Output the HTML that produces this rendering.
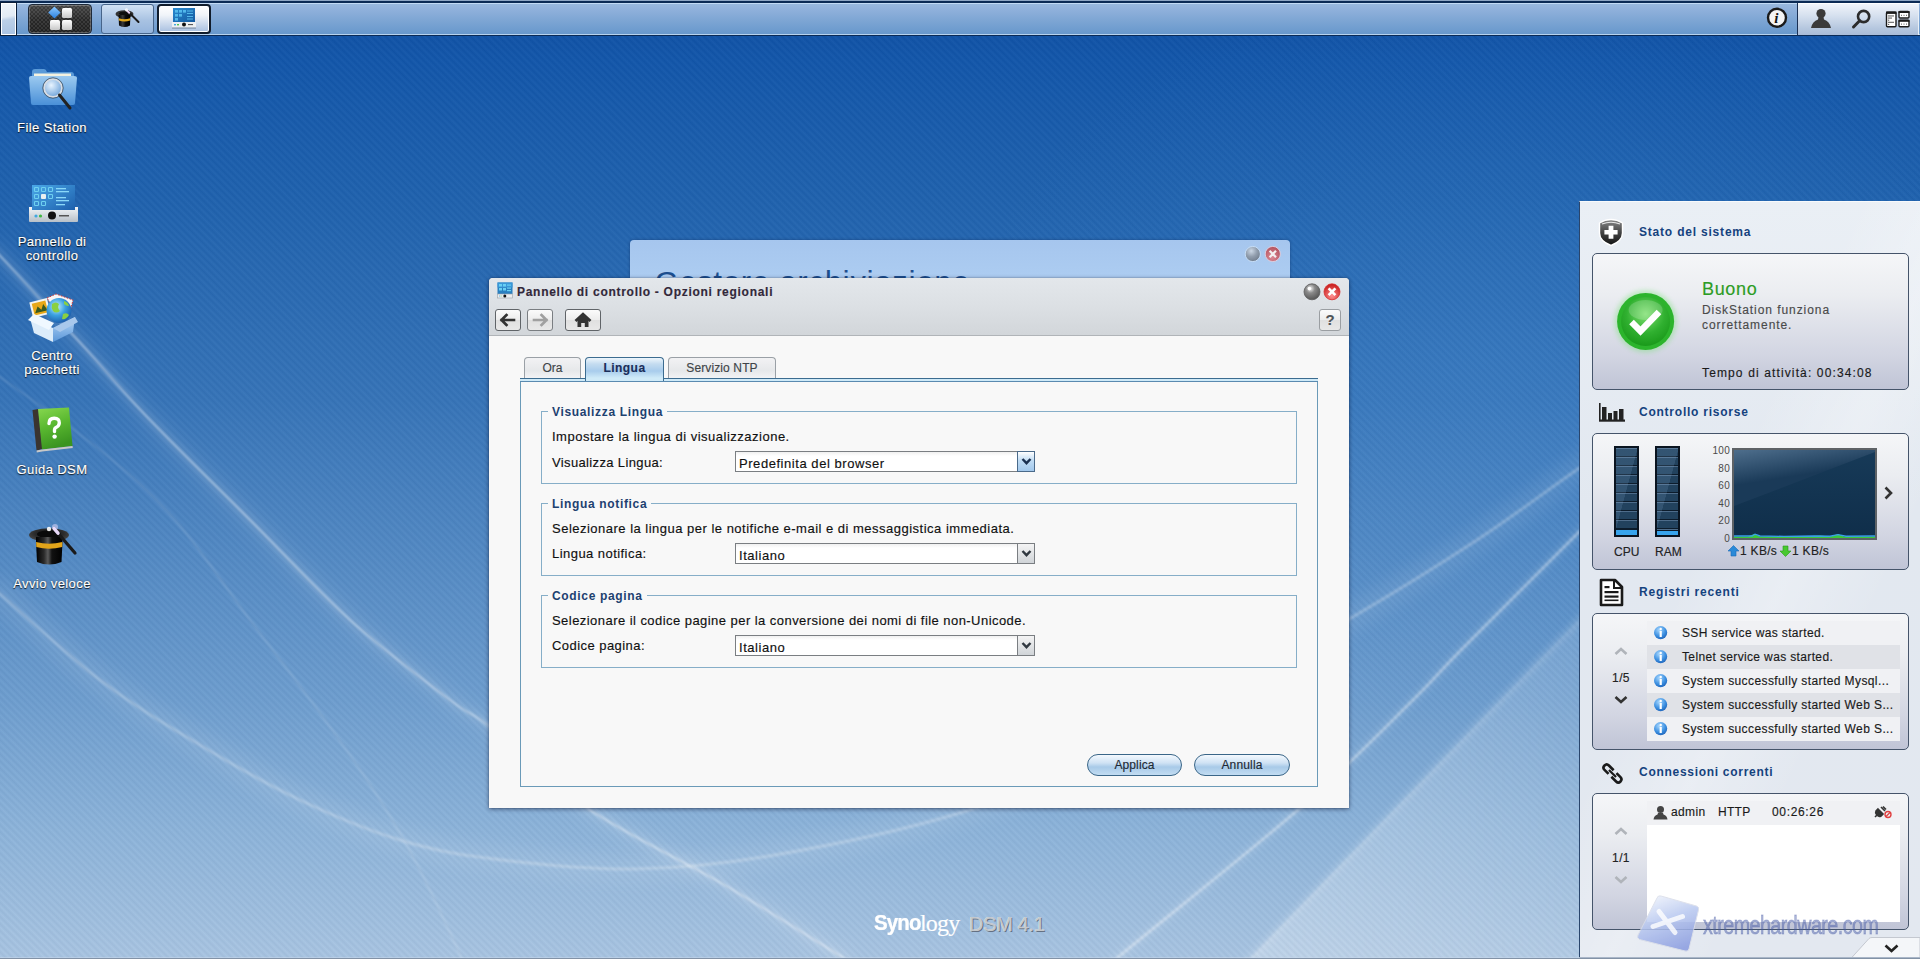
<!DOCTYPE html>
<html><head><meta charset="utf-8"><title>Synology DSM 4.1</title>
<style>
*{margin:0;padding:0;box-sizing:border-box}
html,body{width:1920px;height:959px;overflow:hidden}
body{position:relative;font-family:"Liberation Sans",sans-serif;
background:radial-gradient(ellipse 520px 380px at 1480px 360px,rgba(80,160,235,0.16),rgba(80,160,235,0) 100%),linear-gradient(180deg,#0e4ea2 0px,#1256aa 60px,#1f62ae 200px,#3674b8 400px,#6e9ecf 700px,#8db4da 830px,#a9c5e2 959px)}
.a{position:absolute}
.t{position:absolute;white-space:nowrap;line-height:14px}
.dt,.cb span,.tab,.pb,.lr,.t,.dl{-webkit-text-stroke:0.15px currentColor}
#tex{position:absolute;left:0;top:0;width:1920px;height:959px;
background:repeating-linear-gradient(45deg,rgba(0,20,60,0.045) 0px,rgba(255,255,255,0.03) 2.5px,rgba(0,20,60,0.045) 5px)}
</style></head><body>
<!-- BACKGROUND CURVES -->
<svg class="a" style="left:0;top:0" width="1920" height="959">
<defs>
<filter id="b1" x="-20%" y="-20%" width="140%" height="140%"><feGaussianBlur stdDeviation="1.2"/></filter>
<filter id="b3" x="-20%" y="-20%" width="140%" height="140%"><feGaussianBlur stdDeviation="3"/></filter>
<filter id="b8" x="-20%" y="-20%" width="140%" height="140%"><feGaussianBlur stdDeviation="8"/></filter>
<linearGradient id="r3g" x1="0" y1="0" x2="1" y2="0"><stop offset="0" stop-color="#fff" stop-opacity="0.28"/><stop offset="1" stop-color="#fff" stop-opacity="0.12"/></linearGradient></defs>
<path d="M-10.0,585.0 C8.3,600.8 65.0,653.3 100.0,680.0 C135.0,706.7 166.7,725.0 200.0,745.0 C233.3,765.0 266.7,784.2 300.0,800.0 C333.3,815.8 367.7,830.2 400.0,840.0 C432.3,849.8 455.0,854.2 494.0,859.0 C533.0,863.8 587.2,869.7 634.0,869.0 C680.8,868.3 720.2,864.5 775.0,855.0 C829.8,845.5 905.8,829.5 963.0,812.0 C1020.2,794.5 1053.3,782.3 1118.0,750.0 C1182.7,717.7 1291.2,653.0 1351.0,618.0 C1410.8,583.0 1439.2,564.8 1477.0,540.0 C1514.8,515.2 1540.8,494.8 1578.0,469.0 C1615.2,443.2 1679.7,399.0 1700.0,385.0" stroke="#ffffff" stroke-width="26" fill="none" opacity="0.08" filter="url(#b8)"/>
<path d="M-10.0,585.0 C8.3,600.8 65.0,653.3 100.0,680.0 C135.0,706.7 166.7,725.0 200.0,745.0 C233.3,765.0 266.7,784.2 300.0,800.0 C333.3,815.8 367.7,830.2 400.0,840.0 C432.3,849.8 455.0,854.2 494.0,859.0 C533.0,863.8 587.2,869.7 634.0,869.0 C680.8,868.3 720.2,864.5 775.0,855.0 C829.8,845.5 905.8,829.5 963.0,812.0 C1020.2,794.5 1053.3,782.3 1118.0,750.0 C1182.7,717.7 1291.2,653.0 1351.0,618.0 C1410.8,583.0 1439.2,564.8 1477.0,540.0 C1514.8,515.2 1540.8,494.8 1578.0,469.0 C1615.2,443.2 1679.7,399.0 1700.0,385.0" stroke="#ffffff" stroke-width="3" fill="none" opacity="0.26" filter="url(#b1)"/>
<path d="M-10.0,245.0 C4.2,260.3 48.3,307.8 75.0,337.0 C101.7,366.2 120.8,389.5 150.0,420.0 C179.2,450.5 216.7,486.7 250.0,520.0 C283.3,553.3 316.7,590.0 350.0,620.0 C383.3,650.0 426.7,682.2 450.0,700.0 C473.3,717.8 467.2,709.0 490.0,727.0 C512.8,745.0 547.3,781.3 587.0,808.0 C626.7,834.7 684.2,861.3 728.0,887.0 C771.8,912.7 829.7,949.5 850.0,962.0" stroke="#ffffff" stroke-width="22" fill="none" opacity="0.06" filter="url(#b8)"/>
<path d="M-10.0,245.0 C4.2,260.3 48.3,307.8 75.0,337.0 C101.7,366.2 120.8,389.5 150.0,420.0 C179.2,450.5 216.7,486.7 250.0,520.0 C283.3,553.3 316.7,590.0 350.0,620.0 C383.3,650.0 426.7,682.2 450.0,700.0 C473.3,717.8 467.2,709.0 490.0,727.0 C512.8,745.0 547.3,781.3 587.0,808.0 C626.7,834.7 684.2,861.3 728.0,887.0 C771.8,912.7 829.7,949.5 850.0,962.0" stroke="#ffffff" stroke-width="10" fill="none" opacity="0.08" filter="url(#b3)"/>
<path d="M-10.0,245.0 C4.2,260.3 48.3,307.8 75.0,337.0 C101.7,366.2 120.8,389.5 150.0,420.0 C179.2,450.5 216.7,486.7 250.0,520.0 C283.3,553.3 316.7,590.0 350.0,620.0 C383.3,650.0 426.7,682.2 450.0,700.0 C473.3,717.8 467.2,709.0 490.0,727.0 C512.8,745.0 547.3,781.3 587.0,808.0 C626.7,834.7 684.2,861.3 728.0,887.0 C771.8,912.7 829.7,949.5 850.0,962.0" stroke="#ffffff" stroke-width="2.2" fill="none" opacity="0.4" filter="url(#b1)"/>
<path d="M-10.0,370.0 C8.3,383.3 69.2,425.0 100.0,450.0 C130.8,475.0 150.0,491.7 175.0,520.0 C200.0,548.3 225.0,586.7 250.0,620.0 C275.0,653.3 303.3,690.0 325.0,720.0 C346.7,750.0 364.2,775.0 380.0,800.0 C395.8,825.0 405.8,842.5 420.0,870.0 C434.2,897.5 457.5,949.2 465.0,965.0" stroke="#ffffff" stroke-width="2" fill="none" opacity="0.14" filter="url(#b1)"/>
<path d="M1090.0,985.0 C1094.3,980.7 1081.0,988.5 1116.0,959.0 C1151.0,929.5 1250.5,851.2 1300.0,808.0 C1349.5,764.8 1386.2,726.3 1413.0,700.0 C1439.8,673.7 1433.5,677.8 1461.0,650.0 C1488.5,622.2 1546.5,564.7 1578.0,533.0 C1609.5,501.3 1638.0,472.2 1650.0,460.0" stroke="#ffffff" stroke-width="2.6" fill="none" opacity="0.38" filter="url(#b1)"/>
<path d="M1090.0,985.0 C1094.3,980.7 1081.0,988.5 1116.0,959.0 C1151.0,929.5 1250.5,851.2 1300.0,808.0 C1349.5,764.8 1386.2,726.3 1413.0,700.0 C1439.8,673.7 1433.5,677.8 1461.0,650.0 C1488.5,622.2 1546.5,564.7 1578.0,533.0 C1609.5,501.3 1638.0,472.2 1650.0,460.0" stroke="#ffffff" stroke-width="10" fill="none" opacity="0.08" filter="url(#b3)"/>
<path d="M1246,962 L1500,700 L1600,598 L1600,962 Z" fill="url(#r3g)" filter="url(#b1)"/>
<path d="M1246,962 L1500,700 L1600,598" stroke="#ffffff" stroke-width="6" opacity="0.15" fill="none" filter="url(#b3)"/>
</svg>
<div id="tex"></div>

<!-- TASKBAR -->
<div class="a" style="left:0;top:0;width:1920px;height:36px;background:linear-gradient(180deg,#8ea6c4 0px,#8ea6c4 1px,#0b2a54 1px,#0b2a54 3px,#c2daf4 3px,#c2daf4 4px,#98b8de 4px,#92b2dc 8px,#7ea6d4 20px,#6898cc 34px,#b6d2ee 34px,#b6d2ee 35px,#0a2a56 35px,#0a2a56 36px)"></div>
<div class="a" style="left:0;top:2px;width:17px;height:34px;background:linear-gradient(170deg,#f0f5fa 0%,#e2ebf5 42%,#bcd0e8 52%,#a8c2e2 100%);border:1px solid #0a1e3a;box-shadow:inset 0 0 0 1px #fff"></div>
<div class="a" style="left:28px;top:4px;width:64px;height:30px;border-radius:4px;border:1px solid #566070;background:linear-gradient(180deg,rgba(255,255,255,0.14),rgba(255,255,255,0.02) 50%,rgba(0,0,0,0.1)),repeating-conic-gradient(#3a3a3a 0 25%,#242424 0 50%) 0 0/4px 4px;border-color:#1e2a3a;box-shadow:inset 0 0 0 1px rgba(200,200,200,0.35),0 1px 0 rgba(255,255,255,0.3)"></div>
<svg class="a" style="left:28px;top:4px" width="64" height="30">
<defs><linearGradient id="tile" x1="0" y1="0" x2="0" y2="1"><stop offset="0" stop-color="#ffffff"/><stop offset="1" stop-color="#c8c8c8"/></linearGradient>
<linearGradient id="dia" x1="0" y1="0" x2="0" y2="1"><stop offset="0" stop-color="#8cc8ff"/><stop offset="1" stop-color="#2a80e0"/></linearGradient></defs>
<rect x="34" y="4" width="10" height="10" rx="1.5" fill="url(#tile)"/>
<rect x="22" y="16" width="10" height="10" rx="1.5" fill="url(#tile)"/>
<rect x="34" y="16" width="10" height="10" rx="1.5" fill="url(#tile)"/>
<path d="M26.4 2.6 L32.6 8.6 L26.4 14.6 L20.2 8.6 Z" fill="url(#dia)"/>
</svg>
<div class="a" style="left:101px;top:4px;width:53px;height:30px;border-radius:3px;border:1px solid #46648a;background:linear-gradient(180deg,#d2e2f4,#a8c2e2 55%,#94b4dc)"></div>
<svg class="a" style="left:101px;top:4px" width="53" height="30">
<defs><linearGradient id="thg" x1="0" y1="0" x2="1" y2="0"><stop offset="0" stop-color="#000"/><stop offset="0.35" stop-color="#3a3a3a"/><stop offset="0.6" stop-color="#0a0a0a"/><stop offset="1" stop-color="#000"/></linearGradient></defs>
<ellipse cx="23.5" cy="10" rx="9" ry="3.8" fill="#333"/>
<ellipse cx="23.5" cy="9.6" rx="5.6" ry="2.1" fill="#0e0e0e"/>
<path d="M17.6 11 L29.4 11 L29 21.5 Q23.5 24.5 18 21.5 Z" fill="url(#thg)"/>
<path d="M17.8 14.3 Q23.5 16.3 29.2 14.3 L29.1 16.6 Q23.5 18.6 17.9 16.6 Z" fill="#e2a81c"/>
<line x1="26" y1="6.5" x2="37.5" y2="18" stroke="#1a1a1a" stroke-width="2" stroke-linecap="round"/>
<line x1="26" y1="6.5" x2="28.2" y2="8.7" stroke="#e8d0f0" stroke-width="2" stroke-linecap="round"/>
<circle cx="25.5" cy="5.8" r="1.6" fill="#fff" opacity="0.85"/>
</svg>
<div class="a" style="left:157px;top:4px;width:54px;height:30px;border-radius:4px;border:2px solid #101c2c;background:linear-gradient(180deg,#ffffff,#f0f4f9 35%,#c4d4ea 75%,#a8c0e0);box-shadow:inset 0 0 0 1px #fff"></div>
<svg class="a" style="left:157px;top:4px" width="54" height="30">
<defs><linearGradient id="tcp" x1="0" y1="0" x2="1" y2="1"><stop offset="0" stop-color="#2a8ad0"/><stop offset="1" stop-color="#145aa0"/></linearGradient></defs>
<rect x="16" y="4" width="22" height="14" fill="url(#tcp)"/>
<g fill="#58c0f0" opacity="0.9"><rect x="18" y="6" width="3" height="2.6"/><rect x="22" y="6" width="3" height="2.6"/><rect x="26" y="6" width="3" height="2.6"/><rect x="18" y="10" width="3" height="2.6"/><rect x="22" y="10" width="3" height="2.6"/><rect x="18" y="14" width="3" height="2.6"/><rect x="30" y="6.5" width="6" height="1"/><rect x="30" y="9" width="6" height="1"/><rect x="30" y="12" width="6" height="1"/><rect x="30" y="14.5" width="6" height="1"/></g>
<rect x="15" y="18" width="24" height="5.5" fill="#eef0f2"/>
<rect x="15" y="23.5" width="24" height="1.2" fill="#6a7a90" opacity="0.7"/>
<circle cx="27" cy="20.6" r="2" fill="#111"/>
<rect x="17" y="20" width="2" height="1.4" fill="#40a8e0"/><rect x="20" y="20" width="2" height="1.4" fill="#50c050"/>
<rect x="31" y="20.2" width="5" height="0.9" fill="#333"/>
</svg>
<!-- right taskbar -->
<svg class="a" style="left:1764px;top:5px" width="26" height="26">
<circle cx="13" cy="12.8" r="9" fill="#f4f4f4" stroke="#1a1a1a" stroke-width="2.4"/>
<text x="12.4" y="18.3" font-family="Liberation Serif" font-size="15" font-style="italic" font-weight="bold" fill="#111" text-anchor="middle">i</text>
</svg>
<div class="a" style="left:1797px;top:3px;width:1px;height:32px;background:#1a3054"></div>
<div class="a" style="left:1798px;top:3px;width:121px;height:32px;background:linear-gradient(180deg,#f0f4fa,#d4dfee 40%,#b4c6de 80%,#aabcd8);border-top:1px solid #fff;border-right:1px solid #e8f0f8"></div>
<svg class="a" style="left:1808px;top:5px" width="112" height="28">
<circle cx="13" cy="8.5" r="4.6" fill="#3a3a3a"/>
<path d="M10.5 12 L15.5 12 L16 14.6 Q21.5 16.5 23 23 L3 23 Q4.5 16.5 10 14.6 Z" fill="#3a3a3a"/>
<circle cx="55.6" cy="11.5" r="5.6" fill="none" stroke="#2c2c2c" stroke-width="2.6"/>
<line x1="51.6" y1="15.8" x2="45.5" y2="22" stroke="#2c2c2c" stroke-width="3" stroke-linecap="round"/>
<rect x="78.5" y="7.2" width="9.5" height="14.5" rx="1" fill="#fff" stroke="#1a1a1a" stroke-width="1.4"/>
<rect x="78" y="6.5" width="10.5" height="2.4" fill="#1a1a1a"/>
<g fill="#444"><rect x="80" y="10.5" width="6" height="0.9"/><rect x="80" y="12.6" width="4" height="0.9"/><rect x="80" y="14.7" width="1.2" height="0.9"/><rect x="80" y="16.8" width="6" height="0.9"/><rect x="80" y="18.9" width="1.2" height="0.9"/></g>
<rect x="91" y="6.5" width="10" height="6.5" rx="1" fill="#fff" stroke="#1a1a1a" stroke-width="1.4"/>
<rect x="90.5" y="6" width="11" height="2" fill="#1a1a1a"/>
<rect x="91" y="15.3" width="10" height="6.5" rx="1" fill="#fff" stroke="#1a1a1a" stroke-width="1.4"/>
<rect x="90.5" y="14.8" width="11" height="2" fill="#1a1a1a"/>
<g fill="#555"><rect x="93" y="9.8" width="1" height="1"/><rect x="95.5" y="9.8" width="1" height="1"/><rect x="98" y="9.8" width="1" height="1"/><rect x="93" y="18.6" width="1" height="1"/><rect x="95.5" y="18.6" width="1" height="1"/><rect x="98" y="18.6" width="1" height="1"/></g>
</svg>
<!-- DESKTOP ICONS -->
<style>
.dl{position:absolute;left:0;width:104px;text-align:center;color:#fff;font-size:13px;line-height:13.7px;letter-spacing:0.4px;text-shadow:0 1px 1px rgba(0,0,0,0.8),0 0 2px rgba(0,0,0,0.5)}
</style>
<svg class="a" style="left:24px;top:63px" width="56" height="52">
<defs>
<linearGradient id="fold" x1="0" y1="0" x2="0" y2="1"><stop offset="0" stop-color="#9ccaf0"/><stop offset="1" stop-color="#4a90d8"/></linearGradient>
<radialGradient id="lens" cx="0.4" cy="0.35" r="0.7"><stop offset="0" stop-color="#e8f4ff"/><stop offset="1" stop-color="#6aa0d8"/></radialGradient>
</defs>
<path d="M8 9 Q8 6 11 6 L20 6 Q22 6 23 9 L47 9 Q50 9 50 12 L50 38 L8 38 Z" fill="#5a9ad8"/>
<rect x="10" y="10.5" width="37" height="6" fill="#f4f2e0"/>
<path d="M5 15 Q5 13 7 13 L50 13 Q53 13 53 15 L51 40 Q51 42 49 42 L9 42 Q7 42 7 40 Z" fill="url(#fold)"/>
<circle cx="29" cy="25" r="9" fill="url(#lens)" stroke="#d8dde4" stroke-width="2"/>
<circle cx="29" cy="25" r="10.2" fill="none" stroke="#3a4a5a" stroke-width="0.8"/>
<line x1="35.5" y1="32" x2="46" y2="45" stroke="#222" stroke-width="3" stroke-linecap="round"/>
</svg>
<div class="dl" style="top:121px">File Station</div>
<svg class="a" style="left:26px;top:180px" width="56" height="46">
<defs><linearGradient id="cps" x1="0" y1="0" x2="1" y2="1"><stop offset="0" stop-color="#4aa8e8"/><stop offset="1" stop-color="#1a5aa8"/></linearGradient>
<linearGradient id="cpb" x1="0" y1="0" x2="0" y2="1"><stop offset="0" stop-color="#f4f6f8"/><stop offset="1" stop-color="#b8c0c8"/></linearGradient></defs>
<rect x="6" y="5" width="43" height="29" fill="url(#cps)"/>
<g fill="none" stroke="#6ed0f0" stroke-width="1.1"><rect x="8.5" y="7.5" width="4" height="4" rx="0.8"/><rect x="15.5" y="7.5" width="4" height="4" rx="0.8"/><rect x="22.5" y="7.5" width="4" height="4" rx="0.8"/><rect x="8.5" y="14.5" width="4" height="4" rx="0.8"/><rect x="22.5" y="14.5" width="4" height="4" rx="0.8"/><rect x="8.5" y="21.5" width="4" height="4" rx="0.8"/><rect x="15.5" y="21.5" width="4" height="4" rx="0.8"/></g>
<rect x="15" y="14" width="5" height="5" rx="1" fill="#e8f0f0"/>
<g fill="#8ad8f8"><rect x="30" y="8" width="10" height="1.3"/><rect x="30" y="11" width="13" height="1.3"/><rect x="30" y="17" width="10" height="1.3"/><rect x="30" y="20" width="13" height="1.3"/><rect x="30" y="24" width="9" height="1.3"/></g>
<path d="M3 27 L6 27 L6 30 L49 30 L49 27 L52 27 L52 41 Q52 42 51 42 L4 42 Q3 42 3 41 Z" fill="url(#cpb)"/>
<circle cx="26" cy="35.5" r="4" fill="#111"/>
<circle cx="10" cy="36" r="1.6" fill="#40a8e0"/><circle cx="14.5" cy="36" r="1.6" fill="#40b840"/>
<rect x="33" y="35" width="10" height="1.5" fill="#555"/>
</svg>
<div class="dl" style="top:235px">Pannello di<br>controllo</div>
<svg class="a" style="left:26px;top:292px" width="56" height="52">
<defs><linearGradient id="boxg" x1="0" y1="0" x2="0" y2="1"><stop offset="0" stop-color="#b8d8f8"/><stop offset="1" stop-color="#5a96d8"/></linearGradient>
<radialGradient id="globe" cx="0.4" cy="0.35" r="0.7"><stop offset="0" stop-color="#c8f0ff"/><stop offset="0.5" stop-color="#3aa0e0"/><stop offset="1" stop-color="#1a58a8"/></radialGradient></defs>
<path d="M21 6 L30 2 L47 8 L44 20 L26 14 Z" fill="#f8f4f4" stroke="#d03838" stroke-width="1" stroke-dasharray="1.6 1.4"/>
<g transform="rotate(-14 14 16)"><rect x="5" y="8" width="18" height="16" fill="#f4f4f0"/><rect x="7" y="10" width="14" height="12" fill="#e8a818"/><path d="M8 20 L12 14 L15 18 L18 13 L21 20 Z" fill="#3a5a20"/></g>
<circle cx="33" cy="18.5" r="12.5" fill="url(#globe)"/>
<path d="M26 12 Q30 9 33 12 Q31 16 34 19 Q30 22 27 19 Q25 16 26 12 Z M37 22 Q41 20 43 23 Q40 28 36 27 Z M38 9 Q42 10 43 14 Q40 14 38 12 Z" fill="#8ad040"/>
<path d="M4 26 L27 36 L27 50 L8 41 Z" fill="#dcecfa"/>
<path d="M27 36 L49 25 L47 40 L27 50 Z" fill="url(#boxg)"/>
<path d="M2 28 L8 22 L28 31 L23 38 Z" fill="#f0f8ff"/>
<path d="M49 25 L52 30 L34 40 L27 36 Z" fill="#a8c8ec"/>
</svg>
<div class="dl" style="top:349px">Centro<br>pacchetti</div>
<svg class="a" style="left:26px;top:404px" width="56" height="54">
<defs><linearGradient id="bk" x1="0" y1="0" x2="0.3" y2="1"><stop offset="0" stop-color="#88d850"/><stop offset="0.5" stop-color="#5ab830"/><stop offset="1" stop-color="#3a9420"/></linearGradient></defs>
<path d="M6.5 6 L12.5 5 L16.5 45 L10.5 46.5 Z" fill="#3a3430"/>
<path d="M12 5 L43 3.5 L46.5 42 L16 45.5 Z" fill="url(#bk)"/>
<path d="M10.5 46.5 L16 45.5 L46.5 42 L46.8 44 L16.2 47.6 L10.8 48.4 Z" fill="#c8c8c8"/>
<path d="M23 19.5 Q23 14.2 28.2 14.2 Q33.6 14.2 33.3 19 Q33.1 22.2 29.6 23.8 Q28.3 24.5 28.5 27.5" fill="none" stroke="#fff" stroke-width="3.4" stroke-linecap="round"/>
<circle cx="28.6" cy="32.6" r="2.2" fill="#fff"/>
</svg>
<div class="dl" style="top:463px">Guida DSM</div>
<svg class="a" style="left:26px;top:520px" width="56" height="50">
<defs><linearGradient id="hatg" x1="0" y1="0" x2="1" y2="0"><stop offset="0" stop-color="#000"/><stop offset="0.3" stop-color="#2a2a2a"/><stop offset="0.45" stop-color="#5a5a5a"/><stop offset="0.6" stop-color="#111"/><stop offset="1" stop-color="#000"/></linearGradient>
<radialGradient id="brim" cx="0.5" cy="0.4" r="0.6"><stop offset="0" stop-color="#111"/><stop offset="0.6" stop-color="#2a2a2a"/><stop offset="1" stop-color="#4a4a4a"/></radialGradient></defs>
<ellipse cx="23" cy="15" rx="20" ry="6.8" fill="url(#brim)"/>
<ellipse cx="23" cy="14.2" rx="12" ry="3.8" fill="#0a0a0a"/>
<path d="M10 17 L36 17 L36.5 22 L35.5 42 Q23 47 11 42 L10 22 Z" fill="url(#hatg)"/>
<path d="M10.1 22 Q23 25.5 36.4 22 L36.2 27 Q23 30.5 10.3 27 Z" fill="#e2a41a"/>
<line x1="28" y1="8.5" x2="49" y2="33" stroke="#1a1a1a" stroke-width="3.2" stroke-linecap="round"/>
<line x1="28" y1="8.5" x2="32" y2="13.2" stroke="#e8d8f8" stroke-width="3.4" stroke-linecap="round"/>
<circle cx="23" cy="9" r="2.2" fill="#fff" opacity="0.9"/>
<circle cx="29" cy="7" r="3" fill="#f0e0ff" opacity="0.5"/>
</svg>
<div class="dl" style="top:577px">Avvio veloce</div>


<!-- BACKGROUND WINDOW -->
<div class="a" style="left:630px;top:240px;width:660px;height:60px;border-radius:4px 4px 0 0;background:linear-gradient(180deg,#a6c6ee,#aecef2 80%,#a4bcd8);box-shadow:0 0 3px rgba(0,20,60,0.4);overflow:hidden">
<div class="t" style="left:25px;top:25px;font-size:30px;line-height:34px;color:#1c4e8e;letter-spacing:1.2px">Gestore archiviazione</div>
</div>
<svg class="a" style="left:1240px;top:242px" width="46" height="24">
<defs>
<radialGradient id="gball" cx="0.4" cy="0.3" r="0.75"><stop offset="0" stop-color="#d8dde2"/><stop offset="0.5" stop-color="#8a9098"/><stop offset="1" stop-color="#5a6068"/></radialGradient>
<radialGradient id="rball" cx="0.45" cy="0.7" r="0.7"><stop offset="0" stop-color="#f07070"/><stop offset="1" stop-color="#b82020"/></radialGradient>
</defs>
<circle cx="12.8" cy="12" r="7.6" fill="url(#gball)" opacity="0.75" stroke="#d0e4f8" stroke-width="1"/>
<circle cx="32.8" cy="12" r="7.6" fill="url(#rball)" opacity="0.7" stroke="#f0d0d8" stroke-width="1"/>
<path d="M29.6 8.8 L36 15.2 M36 8.8 L29.6 15.2" stroke="#f4f0f0" stroke-width="2.2"/>
</svg>
<!-- MAIN DIALOG -->
<div class="a" style="left:489px;top:278px;width:860px;height:530px;border-radius:4px 4px 0 0;background:#f8f8f8;box-shadow:0 1px 4px rgba(0,10,40,0.55),0 0 1px rgba(0,0,0,0.5)">
<div class="a" style="left:0;top:0;width:860px;height:58px;border-radius:4px 4px 0 0;background:linear-gradient(180deg,#e3e7eb 0px,#dce0e4 28px,#d2d6da 57px);border-bottom:1px solid #b0b4b8"></div>
</div>
<svg class="a" style="left:497px;top:282px" width="16" height="17">
<rect x="0.5" y="0.5" width="15" height="11.5" fill="#2a80c0"/>
<rect x="0.5" y="0.5" width="15" height="5" fill="#3a98d8"/>
<g fill="#68d0f4"><rect x="2" y="2" width="3" height="2.5"/><rect x="6" y="2" width="3" height="2.5"/><rect x="10" y="2.5" width="4" height="1.2"/><rect x="2" y="6" width="3" height="2.5"/><rect x="6" y="6" width="3" height="2.5"/><rect x="10" y="5.5" width="4" height="1.2"/><rect x="10" y="8" width="4" height="1.2"/></g>
<rect x="0.5" y="12" width="15" height="4" fill="#eceef0" stroke="#9aa0a8" stroke-width="0.6"/>
<circle cx="7.8" cy="14" r="1.5" fill="#111"/>
<rect x="2" y="13.6" width="1" height="0.8" fill="#4ab0e8"/><rect x="3.6" y="13.6" width="1" height="0.8" fill="#50c050"/>
</svg>
<div class="t" style="left:517px;top:285px;font-size:12px;font-weight:bold;color:#32283a;letter-spacing:0.72px">Pannello di controllo - Opzioni regionali</div>
<svg class="a" style="left:1300px;top:280px" width="46" height="24">
<defs>
<radialGradient id="gball2" cx="0.4" cy="0.3" r="0.8"><stop offset="0" stop-color="#f0f0f0"/><stop offset="0.35" stop-color="#8a8a8a"/><stop offset="1" stop-color="#4a4a4a"/></radialGradient>
<radialGradient id="rball2" cx="0.5" cy="0.75" r="0.7"><stop offset="0" stop-color="#ff9090"/><stop offset="1" stop-color="#c82020"/></radialGradient>
</defs>
<circle cx="12" cy="11.8" r="8" fill="url(#gball2)" stroke="#5a5a5a" stroke-width="0.8"/>
<circle cx="9.4" cy="8.6" r="1.8" fill="#fff"/>
<circle cx="32" cy="11.8" r="8" fill="url(#rball2)" stroke="#d83030" stroke-width="0.8"/>
<path d="M28.6 8.4 L35.4 15.2 M35.4 8.4 L28.6 15.2" stroke="#fff" stroke-width="2.6"/>
</svg>
<style>
.tb{position:absolute;top:309px;height:22px;border:1px solid #606468;border-radius:3px;background:linear-gradient(180deg,#fbfbfb,#ececec 50%,#e0e0e0 51%,#e8e8e8)}
</style>
<div class="tb" style="left:495px;width:26px"></div>
<div class="tb" style="left:527px;width:26px;border-color:#7a7e82"></div>
<div class="tb" style="left:565px;width:36px"></div>
<div class="tb" style="left:1319px;width:22px;border-color:#9a9ea2"></div>
<svg class="a" style="left:495px;top:309px" width="110" height="22">
<path d="M6.5 11 L11.5 6 M6.5 11 L11.5 16 M6.5 11 L19 11" stroke="#333" stroke-width="2.6" fill="none" stroke-linecap="square"/>
<path d="M51.5 11 L46.5 6 M51.5 11 L46.5 16 M51.5 11 L39 11" stroke="#a0a0a0" stroke-width="2.6" fill="none" stroke-linecap="square"/>
<path d="M80.5 12 L88 5.2 L95.5 12" stroke="#333" stroke-width="2.8" fill="none" stroke-linejoin="miter"/><path d="M82.5 10.5 L88 5.8 L93.5 10.5 L93.5 18 L89.8 18 L89.8 14 L86.2 14 L86.2 18 L82.5 18 Z" fill="#333"/>
</svg>
<div class="t" style="left:1319px;top:312px;width:22px;text-align:center;font-size:15px;line-height:16px;font-weight:bold;color:#505458">?</div>
<!-- TABS -->
<style>
.tab{position:absolute;top:357px;height:22px;border:1px solid #9aa0a6;border-bottom:none;border-radius:4px 4px 0 0;background:linear-gradient(180deg,#f2f2f4,#e6e8ea 60%,#f4f4f6);text-align:center;font-size:12px;line-height:20px;color:#404448}
</style>
<div class="tab" style="left:524px;width:57px;letter-spacing:0px">Ora</div>
<div class="tab" style="left:668px;width:108px;letter-spacing:0.12px">Servizio NTP</div>
<div class="a" style="left:520px;top:378px;width:798px;height:409px;border:1px solid #6a9ab8;border-top:none;background:#f8f8f8"></div>
<div class="a" style="left:520px;top:378px;width:798px;height:4px;border-top:1px solid #3c6c90;border-bottom:1px solid #5a8ab0;background:#cfeaf8"></div>
<div class="tab" style="left:585px;top:357px;height:24px;width:79px;border-color:#3c6c90;background:linear-gradient(180deg,#eef6fc 0px,#c4dcf0 6px,#a8ccec 13px,#cfeaf8 20px,#cfeaf8 25px);font-weight:bold;color:#1a2e5a;letter-spacing:0.45px">Lingua</div>
<!-- FIELDSETS -->
<style>
.fs{position:absolute;left:541px;width:756px;height:73px;border:1px solid #86aec8}
.lg{position:absolute;left:548px;padding:0 4px;background:#f8f8f8;font-size:12px;font-weight:bold;color:#1d4170;letter-spacing:0.66px;line-height:14px;white-space:nowrap}
.dt{position:absolute;left:552px;font-size:13px;line-height:14px;color:#101010;letter-spacing:0.5px;white-space:nowrap}
.cb{position:absolute;left:735px;width:300px;height:21px;border:1px solid #7a7e82;background:linear-gradient(180deg,#f0f0f0 0px,#ffffff 4px)}
.cb span{position:absolute;left:3px;top:4px;font-size:13px;line-height:16px;color:#101010;letter-spacing:0.55px}
.cbt{position:absolute;right:-1px;top:-1px;width:18px;height:21px;border:1px solid #7a7e82;background:linear-gradient(180deg,#f4f4f4,#d0d4d8)}
.cbt.on{border-color:#4a6a8a;background:linear-gradient(180deg,#ffffff,#c0dcf4 45%,#a2c8ec)}
.cbt svg{position:absolute;left:3px;top:5px}
</style>
<div class="fs" style="top:411px"></div>
<div class="lg" style="top:405px">Visualizza Lingua</div>
<div class="dt" style="top:430px">Impostare la lingua di visualizzazione.</div>
<div class="dt" style="top:456px;letter-spacing:0.36px">Visualizza Lingua:</div>
<div class="cb" style="top:451px"><span>Predefinita del browser</span><div class="cbt on"><svg width="11" height="9"><path d="M1.5 2 L5.5 6.2 L9.5 2" stroke="#1a3050" stroke-width="2.4" fill="none"/></svg></div></div>
<div class="fs" style="top:503px"></div>
<div class="lg" style="top:497px">Lingua notifica</div>
<div class="dt" style="top:522px;letter-spacing:0.49px">Selezionare la lingua per le notifiche e-mail e di messaggistica immediata.</div>
<div class="dt" style="top:547px;letter-spacing:0.45px">Lingua notifica:</div>
<div class="cb" style="top:543px"><span>Italiano</span><div class="cbt"><svg width="11" height="9"><path d="M1.5 2 L5.5 6.2 L9.5 2" stroke="#303840" stroke-width="2.4" fill="none"/></svg></div></div>
<div class="fs" style="top:595px"></div>
<div class="lg" style="top:589px">Codice pagina</div>
<div class="dt" style="top:614px;letter-spacing:0.45px">Selezionare il codice pagine per la conversione dei nomi di file non-Unicode.</div>
<div class="dt" style="top:639px;letter-spacing:0.45px">Codice pagina:</div>
<div class="cb" style="top:635px"><span>Italiano</span><div class="cbt"><svg width="11" height="9"><path d="M1.5 2 L5.5 6.2 L9.5 2" stroke="#303840" stroke-width="2.4" fill="none"/></svg></div></div>
<!-- BUTTONS -->
<style>
.pb{position:absolute;top:754px;height:22px;border:1px solid #3a6688;border-radius:11px;background:linear-gradient(180deg,#f4f9fe 0%,#cfe2f4 40%,#a8cae8 60%,#c2dcf2 100%);text-align:center;font-size:12px;line-height:20px;color:#1e2a36;letter-spacing:0.1px}
</style>
<div class="pb" style="left:1087px;width:95px">Applica</div>
<div class="pb" style="left:1194px;width:96px;letter-spacing:0.17px">Annulla</div>


<!-- RIGHT PANEL -->
<style>
.wt{position:absolute;left:1639px;font-size:12px;font-weight:bold;color:#15427e;letter-spacing:0.8px;line-height:14px;white-space:nowrap}
.wb{position:absolute;left:1592px;width:317px;border:1px solid #45546a;border-radius:5px;background:linear-gradient(180deg,#f5f6f8 0%,#ebedf1 30%,#d2d5e2 75%,#c0c4d6 100%);overflow:hidden}
</style>
<div class="a" style="left:1579px;top:201px;width:341px;height:758px;background:linear-gradient(180deg,#eaeff5 0%,#e2e8f0 40%,#e3e8f0 100%);border-left:1px solid #29456c;border-top:1px solid #f8fafc"></div>
<div class="a" style="left:1580px;top:202px;width:340px;height:756px;background:linear-gradient(115deg,rgba(255,255,255,0) 40%,rgba(255,255,255,0.25) 55%,rgba(255,255,255,0) 70%)"></div>
<!-- Stato del sistema -->
<svg class="a" style="left:1597px;top:217px" width="28" height="30">
<defs><linearGradient id="shg" x1="0" y1="0" x2="0" y2="1"><stop offset="0" stop-color="#8a8a8a"/><stop offset="0.5" stop-color="#444"/><stop offset="1" stop-color="#111"/></linearGradient></defs>
<path d="M14 2.5 Q20 2.5 25.5 6 L25.5 16 Q25.5 24 14 28.5 Q2.5 24 2.5 16 L2.5 6 Q8 2.5 14 2.5 Z" fill="url(#shg)" stroke="#fff" stroke-width="1.4"/>
<path d="M5 7 Q14 3.5 23 7" stroke="#e8e8e8" stroke-width="1.2" fill="none"/>
<path d="M11.6 8.8 L16.4 8.8 L16.4 13 L20.6 13 L20.6 17.6 L16.4 17.6 L16.4 21.8 L11.6 21.8 L11.6 17.6 L7.4 17.6 L7.4 13 L11.6 13 Z" fill="#fff"/>
</svg>
<div class="wt" style="top:225px">Stato del sistema</div>
<div class="wb" style="top:253px;height:137px"></div>
<svg class="a" style="left:1610px;top:286px" width="72" height="72">
<defs><radialGradient id="gck" cx="0.5" cy="0.35" r="0.65"><stop offset="0" stop-color="#7ee070"/><stop offset="0.6" stop-color="#30b030"/><stop offset="1" stop-color="#1a9a1a"/></radialGradient>
<filter id="glow" x="-30%" y="-30%" width="160%" height="160%"><feGaussianBlur stdDeviation="2.5"/></filter></defs>
<circle cx="35.6" cy="35.4" r="31" fill="#7ae07a" opacity="0.45" filter="url(#glow)"/>
<circle cx="35.6" cy="35.4" r="28.5" fill="#2cb42c"/>
<circle cx="35.6" cy="35.4" r="24.5" fill="url(#gck)"/>
<ellipse cx="35.6" cy="24" rx="17" ry="10" fill="#fff" opacity="0.18"/>
<path d="M21.5 36 L30.5 45 L49 26" stroke="#fff" stroke-width="6.5" fill="none" stroke-linejoin="miter"/>
</svg>
<div class="t" style="left:1702px;top:280px;font-size:18px;line-height:18px;color:#2c9c24;letter-spacing:0.67px">Buono</div>
<div class="t" style="left:1702px;top:303px;font-size:12px;line-height:14.5px;color:#4a4a4a;letter-spacing:0.93px">DiskStation funziona<br>correttamente.</div>
<div class="t" style="left:1702px;top:366px;font-size:12px;color:#1a1a1a;letter-spacing:1.13px">Tempo di attività: 00:34:08</div>
<!-- Controllo risorse -->
<svg class="a" style="left:1597px;top:401px" width="30" height="24">
<g fill="#222"><rect x="2" y="2" width="1.6" height="18"/><rect x="2" y="18.5" width="26" height="2.2"/><rect x="5" y="6" width="4.5" height="13"/><rect x="11" y="12" width="4" height="7"/><rect x="16.5" y="10" width="4" height="9"/><rect x="22" y="8" width="4.5" height="11"/></g>
</svg>
<div class="wt" style="top:405px;letter-spacing:0.76px">Controllo risorse</div>
<div class="wb" style="top:433px;height:137px"></div>
<style>
.bar{position:absolute;top:446px;width:25px;height:91px;border:2px solid #0a1420;background:repeating-linear-gradient(180deg,#4e6c8a 0px,#4e6c8a 1px,#22425e 1px,#22425e 8px,#0c1c2c 8px,#0c1c2c 9px);background-position:0 0}
.bar i{position:absolute;left:0;bottom:0;width:21px;height:6px;background:#38a4ec;border-top:1px solid #0c1c2c}
</style>
<div class="bar" style="left:1614px"><i></i></div>
<div class="bar" style="left:1655px"><i style="height:5px"></i></div>
<div class="a" style="left:1616px;top:448px;width:21px;height:82px;background:linear-gradient(105deg,rgba(140,180,220,0.16) 0%,rgba(140,180,220,0.16) 50%,rgba(0,0,0,0) 51%)"></div>
<div class="a" style="left:1657px;top:448px;width:21px;height:82px;background:linear-gradient(105deg,rgba(140,180,220,0.16) 0%,rgba(140,180,220,0.16) 50%,rgba(0,0,0,0) 51%)"></div>
<div class="t" style="left:1614px;top:545px;width:25px;text-align:center;font-size:12px;color:#222">CPU</div>
<div class="t" style="left:1655px;top:545px;width:25px;text-align:center;font-size:12px;color:#222">RAM</div>
<style>.yl{position:absolute;left:1700px;width:30px;text-align:right;font-size:10px;line-height:10px;color:#4a4a4a;letter-spacing:0.3px}</style>
<div class="yl" style="top:446px">100</div><div class="yl" style="top:464px">80</div><div class="yl" style="top:481px">60</div><div class="yl" style="top:499px">40</div><div class="yl" style="top:516px">20</div><div class="yl" style="top:534px">0</div>
<div class="a" style="left:1732px;top:448px;width:145px;height:92px;border:2px solid #5e6266;background:linear-gradient(180deg,#173a58,#0f2e4a)"></div>
<svg class="a" style="left:1734px;top:450px" width="141" height="88"><defs><linearGradient id="gsh" x1="0" y1="0" x2="0.22" y2="0.55"><stop offset="0" stop-color="#4e6e8c"/><stop offset="1" stop-color="#1a3a58"/></linearGradient></defs><path d="M0 0 L141 0 L141 2 L0 56 Z" fill="url(#gsh)"/></svg>
<svg class="a" style="left:1734px;top:450px" width="141" height="88">
<path d="M0 86.5 L14 86.5 L20 84 L26 86.5 L70 86.5 L86 85.5 L96 86.5 L104 84 L110 86.5 L141 86.5 L141 88 L0 88 Z" fill="#3ac83a"/>
<path d="M0 86 L18 86 L21 84.2 L26 86 L50 86.4 L80 86 L96 86.2 L104 84.6 L112 86.2 L141 86" stroke="#3aa0e8" stroke-width="1.4" fill="none"/>
</svg>
<svg class="a" style="left:1882px;top:485px" width="14" height="16"><path d="M3.5 2.5 L9 8 L3.5 13.5" stroke="#333" stroke-width="2.6" fill="none"/></svg>
<svg class="a" style="left:1727px;top:544px" width="110" height="14">
<path d="M6.5 1.5 L12 7 L9 7 L9 12 L4 12 L4 7 L1 7 Z" fill="#2a8ad8" stroke="#1a6ab8" stroke-width="0.6"/>
<path d="M58.5 12.5 L64 7 L61 7 L61 2 L56 2 L56 7 L53 7 Z" fill="#48c830" stroke="#289a18" stroke-width="0.6"/>
</svg>
<div class="t" style="left:1740px;top:544px;font-size:12px;color:#222;letter-spacing:0.3px">1 KB/s</div>
<div class="t" style="left:1792px;top:544px;font-size:12px;color:#222;letter-spacing:0.3px">1 KB/s</div>
<!-- Registri recenti -->
<svg class="a" style="left:1598px;top:578px" width="28" height="30">
<path d="M3 2 L17 2 L24 9 L24 27 L3 27 Z" fill="#fff" stroke="#1a1a1a" stroke-width="2.6" stroke-linejoin="round"/>
<path d="M16 2.5 L16 10 L23.5 10" fill="none" stroke="#1a1a1a" stroke-width="2"/>
<g fill="#1a1a1a"><rect x="6.5" y="8" width="5" height="2.2"/><rect x="6.5" y="13" width="14" height="2.2"/><rect x="6.5" y="17.5" width="14" height="2.2"/><rect x="6.5" y="21.5" width="14" height="1.6"/></g>
</svg>
<div class="wt" style="top:585px;letter-spacing:0.83px">Registri recenti</div>
<div class="wb" style="top:613px;height:137px"></div>
<div class="a" style="left:1647px;top:621px;width:253px;height:120px;background:#f0f1f4"></div>
<div class="a" style="left:1647px;top:645px;width:253px;height:24px;background:#e0e2e7"></div>
<div class="a" style="left:1647px;top:693px;width:253px;height:24px;background:#e0e2e7"></div>
<svg class="a" style="left:1605px;top:640px" width="32" height="70">
<path d="M10.5 14 L16 9 L21.5 14" stroke="#b0b4ba" stroke-width="2.6" fill="none"/>
<path d="M10.5 57 L16 62 L21.5 57" stroke="#333" stroke-width="2.6" fill="none"/>
</svg>
<div class="t" style="left:1604px;top:671px;width:34px;text-align:center;font-size:12px;color:#222;letter-spacing:0.37px">1/5</div>
<style>.lr{position:absolute;left:1682px;font-size:12px;line-height:14px;color:#1a1a1a;letter-spacing:0.4px;white-space:nowrap}</style>
<svg class="a" style="left:1652px;top:624px" width="18" height="114">
<defs><radialGradient id="ig" cx="0.4" cy="0.3" r="0.8"><stop offset="0" stop-color="#a8d8ff"/><stop offset="0.6" stop-color="#3a8ee0"/><stop offset="1" stop-color="#1a5ab0"/></radialGradient>
<g id="info"><circle cx="8.6" cy="8.6" r="6.6" fill="url(#ig)"/><rect x="7.6" y="7" width="2.2" height="6" fill="#fff"/><circle cx="8.7" cy="5" r="1.2" fill="#fff"/></g></defs>
<use href="#info" y="0"/><use href="#info" y="24"/><use href="#info" y="48"/><use href="#info" y="72"/><use href="#info" y="96"/>
</svg>
<div class="lr" style="top:626px;letter-spacing:0.36px">SSH service was started.</div>
<div class="lr" style="top:650px;letter-spacing:0.36px">Telnet service was started.</div>
<div class="lr" style="top:674px">System successfully started Mysql...</div>
<div class="lr" style="top:698px">System successfully started Web S...</div>
<div class="lr" style="top:722px">System successfully started Web S...</div>
<!-- Connessioni correnti -->
<svg class="a" style="left:1598px;top:759px" width="30" height="30">
<g transform="rotate(45 14.5 14.5)" fill="none" stroke="#1a1a1a" stroke-width="2.6" stroke-linecap="butt">
<path d="M13 11.4 L6.3 11.4 Q3.2 11.4 3.2 14.5 Q3.2 17.6 6.3 17.6 L12 17.6"/>
<path d="M16 17.6 L22.7 17.6 Q25.8 17.6 25.8 14.5 Q25.8 11.4 22.7 11.4 L17 11.4"/>
<path d="M9.5 14.5 L19.5 14.5" stroke-width="2.2"/>
</g>
</svg>
<div class="wt" style="top:765px;letter-spacing:0.71px">Connessioni correnti</div>
<div class="wb" style="top:793px;height:137px"></div>
<div class="a" style="left:1647px;top:801px;width:253px;height:24px;background:#f0f1f4"></div>
<div class="a" style="left:1647px;top:825px;width:253px;height:97px;background:#ffffff"></div>
<svg class="a" style="left:1653px;top:805px" width="16" height="16"><circle cx="7.5" cy="4.5" r="3.5" fill="#444"/><path d="M5 8 L10 8 L10.5 9.5 Q14 10.5 14.5 14.5 L0.5 14.5 Q1 10.5 4.5 9.5 Z" fill="#444"/></svg>
<div class="t" style="left:1671px;top:805px;font-size:12px;color:#1a1a1a;letter-spacing:0.36px">admin</div>
<div class="t" style="left:1718px;top:805px;font-size:12px;color:#1a1a1a;letter-spacing:0.3px">HTTP</div>
<div class="t" style="left:1772px;top:805px;font-size:12px;color:#1a1a1a;letter-spacing:0.66px">00:26:26</div>
<svg class="a" style="left:1873px;top:805px" width="20" height="14">
<path d="M2 12 L6 8 M5 4 L10 9 L8 11 Q6 12 4.5 10.5 L3.5 9.5 Q2 8 3 6 Z M8 2 L12 6 M10 1.5 L13 4.5" stroke="#333" stroke-width="1.6" fill="#333"/>
<circle cx="15" cy="9.5" r="3" fill="none" stroke="#e04040" stroke-width="1.4"/><path d="M13 11.5 L17 7.5" stroke="#e04040" stroke-width="1.2"/>
</svg>
<svg class="a" style="left:1605px;top:820px" width="32" height="70">
<path d="M10.5 14 L16 9 L21.5 14" stroke="#b0b4ba" stroke-width="2.6" fill="none"/>
<path d="M10.5 57 L16 62 L21.5 57" stroke="#b0b4ba" stroke-width="2.6" fill="none"/>
</svg>
<div class="t" style="left:1604px;top:851px;width:34px;text-align:center;font-size:12px;color:#222;letter-spacing:0.37px">1/1</div>
<!-- bottom tab -->
<svg class="a" style="left:1850px;top:936px" width="70" height="23">
<path d="M0 23.5 L19 2.5 Q20 1.5 22 1.5 L70 1.5 L70 23.5 Z" fill="#f4f6f9" stroke="#c4c8d0" stroke-width="1"/>
<path d="M35.5 9.5 L41.5 15 L47.5 9.5" stroke="#222" stroke-width="2.6" fill="none"/>
</svg>
<div class="a" style="left:1579px;top:957px;width:341px;height:2px;background:#8a94a4"></div>


<!-- SYNOLOGY LOGO -->
<div class="t" style="left:874px;top:909px;font-size:22px;line-height:28px;color:#fff;font-weight:bold;letter-spacing:-0.9px;transform:scaleX(0.93);transform-origin:left top;text-shadow:0 0 1px rgba(255,255,255,0.5)">Syno</div>
<div class="t" style="left:920px;top:909px;font-family:'Liberation Serif',serif;font-size:24px;line-height:28px;color:#fff;letter-spacing:-0.8px">logy</div>
<div class="t" style="left:969px;top:911px;font-size:20px;line-height:26px;color:#c4c8cc;letter-spacing:-0.3px;text-shadow:1px 1px 0 rgba(60,60,70,0.6),-0.5px -0.5px 0 rgba(255,255,255,0.7)">DSM 4.1</div>
<!-- WATERMARK -->
<svg class="a" style="left:1630px;top:888px" width="76" height="70">
<defs><linearGradient id="wmg" x1="0.2" y1="0" x2="0.6" y2="1"><stop offset="0" stop-color="#f0f4fc"/><stop offset="0.45" stop-color="#b8c8f0"/><stop offset="1" stop-color="#8a9ce0"/></linearGradient></defs>
<path d="M31 8 Q28 7 27 10 L8 47 Q6.5 50 9.5 51.5 L55 63 Q58 64 59 61 L68.5 22 Q69.5 19 66.5 18 Z" fill="url(#wmg)" opacity="0.85" stroke="#d8dce8" stroke-width="1"/>
<path d="M29 23.5 L45 44.5 M52.5 28.5 L23 38.5" stroke="#ffffff" stroke-width="5" stroke-linecap="round" opacity="0.8"/>
</svg>
<div class="t" style="left:1703px;top:905px;font-size:20px;line-height:30px;color:rgba(70,90,165,0.45);letter-spacing:-0.55px;transform:scale(0.985,1.3);transform-origin:left top;-webkit-text-stroke:0.6px rgba(70,90,165,0.35)">xtremehardware.com</div>
<div class="a" style="left:0;top:957px;width:1920px;height:1px;background:rgba(200,215,235,0.5)"></div>
<div class="a" style="left:0;top:958px;width:1920px;height:1px;background:#8292a6"></div>
<!-- BODY CONTENT -->
</body></html>
